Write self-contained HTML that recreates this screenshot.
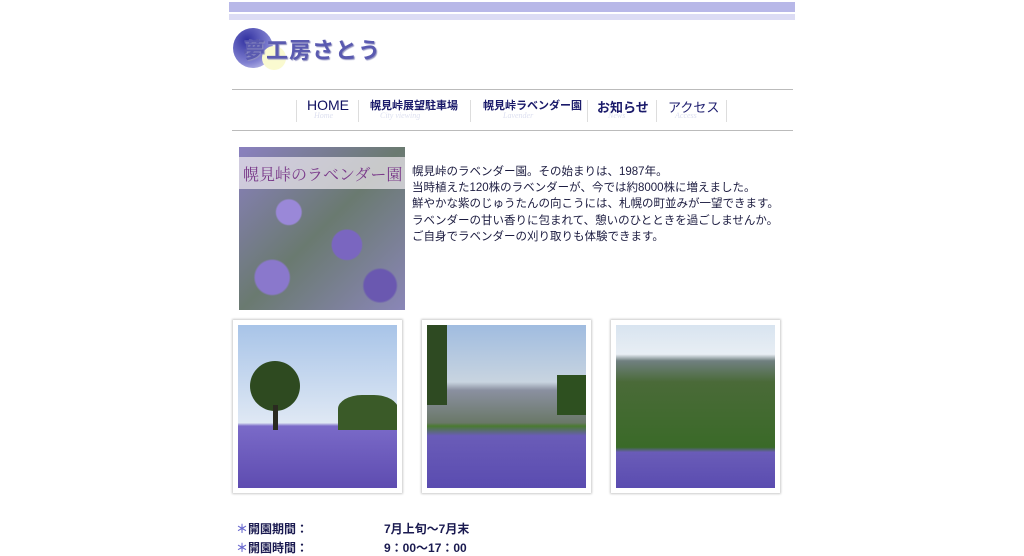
<!DOCTYPE html>
<html><head><meta charset="utf-8"><style>
body{margin:0;background:#fff;width:1024px;height:554px;overflow:hidden;font-family:"Liberation Sans","Noto Sans CJK JP",sans-serif;color:#1c1c4a}
.a{position:absolute}
.frame{position:absolute;width:169px;height:173px;background:#fff;box-shadow:0 0 2px 1px #ccc;top:320px}
.frame .img{position:absolute;left:5px;top:5px;width:159px;height:163px;overflow:hidden}
.nav{font-size:13px;font-weight:bold;color:#1a1a6a;position:absolute;top:97px}
.sub{font-family:"Liberation Serif",serif;font-style:italic;font-size:8px;color:#dde0f0;position:absolute;top:111px}
.sep{position:absolute;top:100px;width:1px;height:22px;background:#ddd}
</style></head><body>
<div class="a" style="left:229px;top:2px;width:566px;height:10px;background:#b8b8e8"></div>
<div class="a" style="left:229px;top:14px;width:566px;height:6px;background:#dcdcf4"></div>
<div class="a" style="left:233px;top:28px;width:40px;height:40px;border-radius:50%;background:radial-gradient(circle at 35% 30%,#3030a0,#8080d0 60%,#e0e0f8)"></div>
<div class="a" style="left:262px;top:46px;width:24px;height:24px;border-radius:50%;background:#fafad0"></div>
<div class="a" style="left:243px;top:33px;font-size:22px;font-weight:bold;color:#5a5ab0;letter-spacing:1px;text-shadow:1px 1px 1px #9090c0">夢工房さとう</div>
<div class="a" style="left:232px;top:89px;width:561px;height:1px;background:#bbb"></div>
<div class="a" style="left:232px;top:130px;width:561px;height:1px;background:#bbb"></div>
<div class="sep" style="left:296px"></div><div class="sep" style="left:358px"></div><div class="sep" style="left:470px"></div><div class="sep" style="left:587px"></div><div class="sep" style="left:656px"></div><div class="sep" style="left:726px"></div>
<div class="nav" style="left:307px;font-size:14px;font-weight:normal;color:#101060">HOME</div>
<div class="nav" style="left:370px;font-size:11px">幌見峠展望駐車場</div>
<div class="nav" style="left:483px;font-size:11px">幌見峠ラベンダー園</div>
<div class="nav" style="left:597px">お知らせ</div>
<div class="nav" style="left:668px;font-weight:normal;color:#202070">アクセス</div>
<div class="sub" style="left:314px">Home</div><div class="sub" style="left:380px">City viewing</div><div class="sub" style="left:503px">Lavender</div><div class="sub" style="left:608px">News</div><div class="sub" style="left:675px">Access</div>
<div class="a" style="left:239px;top:147px;width:166px;height:163px;background:radial-gradient(circle at 30% 40%,#9a88d8 0 8%,transparent 9%),radial-gradient(circle at 65% 60%,#7a66c0 0 10%,transparent 11%),radial-gradient(circle at 20% 80%,#8a78cc 0 9%,transparent 10%),radial-gradient(circle at 85% 85%,#6a58b0 0 8%,transparent 9%),linear-gradient(135deg,#8a80c0,#6a7a70 50%,#8a86b8)"></div>
<div class="a" style="left:239px;top:157px;width:166px;height:32px;background:rgba(240,235,240,.7)"></div>
<div class="a" style="left:243px;top:162px;font-family:'Noto Serif CJK SC',serif;font-size:16px;color:#7a3a8a;white-space:nowrap">幌見峠のラベンダー園</div>
<div class="a" style="left:412px;top:164px;font-size:11.5px;line-height:16.2px;color:#1c1c40">幌見峠のラベンダー園。その始まりは、1987年。<br>当時植えた120株のラベンダーが、今では約8000株に増えました。<br>鮮やかな紫のじゅうたんの向こうには、札幌の町並みが一望できます。<br>ラベンダーの甘い香りに包まれて、憩いのひとときを過ごしませんか。<br>ご自身でラベンダーの刈り取りも体験できます。</div>
<div class="frame" style="left:233px"><div class="img" style="background:linear-gradient(#a8c4e8 0,#dfe8f4 60%,#7a6ac8 62%,#5e4cb0)"><div class="a" style="left:12px;top:36px;width:50px;height:50px;border-radius:50%;background:#2e4a20"></div><div class="a" style="left:35px;top:80px;width:5px;height:25px;background:#2a2a20"></div><div class="a" style="left:100px;top:70px;width:60px;height:35px;border-radius:40% 40% 0 0;background:#3a5a28"></div></div></div>
<div class="frame" style="left:422px"><div class="img" style="background:linear-gradient(#a0bce0 0,#c8d4e0 35%,#8a90a0 40%,#6a7868 60%,#4a7a30 62%,#6a5cb8 68%,#5a4cb0)"><div class="a" style="left:0;top:0;width:20px;height:80px;background:#2e4a22"></div><div class="a" style="left:130px;top:50px;width:30px;height:40px;background:#2e5020"></div></div></div>
<div class="frame" style="left:611px"><div class="img" style="background:linear-gradient(#d8e4f0 0,#e8eef4 18%,#708080 22%,#4a6a38 35%,#3a6a28 75%,#6a5cb8 78%,#5a4cb0)"></div></div>
<div class="a" style="left:236px;top:520px;font-size:12px;font-weight:bold;color:#1a1a50"><span style="color:#6a6ad0">＊</span>開園期間：</div>
<div class="a" style="left:236px;top:539px;font-size:12px;font-weight:bold;color:#1a1a50"><span style="color:#6a6ad0">＊</span>開園時間：</div>
<div class="a" style="left:384px;top:520px;font-size:12px;font-weight:bold;color:#1a1a50">7月上旬〜7月末</div>
<div class="a" style="left:384px;top:539px;font-size:12px;font-weight:bold;color:#1a1a50">9：00〜17：00</div>
</body></html>
